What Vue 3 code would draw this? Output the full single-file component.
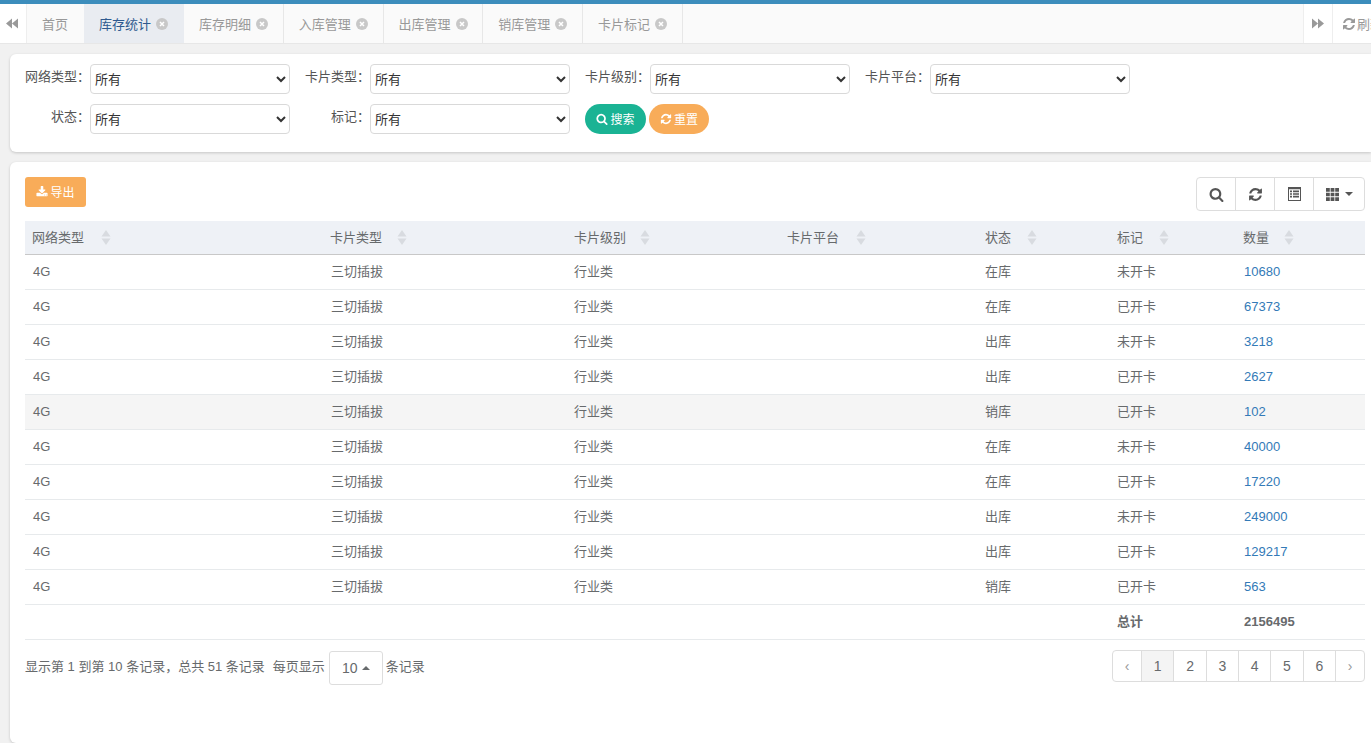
<script setup>
const tabs = [
  { name: '首页', home: true },
  { name: '库存统计', active: true },
  { name: '库存明细' },
  { name: '入库管理' },
  { name: '出库管理' },
  { name: '销库管理' },
  { name: '卡片标记' }
]
const filterRows = [
  ['网络类型', '卡片类型', '卡片级别', '卡片平台'],
  ['状态', '标记']
]
const columns = ['网络类型', '卡片类型', '卡片级别', '卡片平台', '状态', '标记', '数量']
const rows = [
  ['在库', '未开卡', '10680'],
  ['在库', '已开卡', '67373'],
  ['出库', '未开卡', '3218'],
  ['出库', '已开卡', '2627'],
  ['销库', '已开卡', '102', true],
  ['在库', '未开卡', '40000'],
  ['在库', '已开卡', '17220'],
  ['出库', '未开卡', '249000'],
  ['出库', '已开卡', '129217'],
  ['销库', '已开卡', '563']
]
const pages = ['‹', '1', '2', '3', '4', '5', '6', '›']
const searchPath = 'M1216 832q0-185-131.5-316.5t-316.5-131.5-316.5 131.5-131.5 316.5 131.5 316.5 316.5 131.5 316.5-131.5 131.5-316.5zm512 832q0 52-38 90t-90 38q-54 0-90-38l-343-342q-179 124-399 124-143 0-273.5-55.5t-225-150-150-225-55.5-273.5 55.5-273.5 150-225 225-150 273.5-55.5 273.5 55.5 225 150 150 225 55.5 273.5q0 220-124 399l343 343q37 37 37 90z'
const refreshPath = 'M1639 1056q0 5-1 7-64 268-268 434.5t-478 166.5q-146 0-282.5-55t-243.5-157l-129 129q-19 19-45 19t-45-19-19-45v-448q0-26 19-45t45-19h448q26 0 45 19t19 45-19 45l-137 137q71 66 161 102t187 36q134 0 250-65t186-179q11-17 53-117 8-23 30-23h192q13 0 22.5 9.5t9.5 22.5zm25-800v448q0 26-19 45t-45 19h-448q-26 0-45-19t-19-45 19-45l138-138q-148-137-349-137-134 0-250 65t-186 179q-11 17-53 117-8 23-30 23h-199q-13 0-22.5-9.5t-9.5-22.5v-7q65-268 270-434.5t480-166.5q146 0 284 55.5t245 156.5l130-129q19-19 45-19t45 19 19 45z'
const downloadPath = 'M1344 1344q0-26-19-45t-45-19-45 19-19 45 19 45 45 19 45-19 19-45zm256 0q0-26-19-45t-45-19-45 19-19 45 19 45 45 19 45-19 19-45zm128-224v320q0 40-28 68t-68 28h-1472q-40 0-68-28t-28-68v-320q0-40 28-68t68-28h465l135 136q58 56 136 56t136-56l136-136h464q40 0 68 28t28 68zm-325-569q17 41-14 70l-448 448q-18 19-45 19t-45-19l-448-448q-31-29-14-70 17-39 59-39h256v-448q0-26 19-45t45-19h256q26 0 45 19t19 45v448h256q42 0 59 39z'
</script>

<template>
  <div class="page">
    <div class="topline"></div>
    <nav class="tabbar">
      <button class="nav-btn nav-left" type="button">
        <svg class="arrows" viewBox="1 1 12 10"><path d="M7 1v10L1 6zM13 1v10L7 6z" /></svg>
      </button>
      <div class="tabs">
        <div v-for="tab in tabs" :key="tab.name" class="tab" :class="{ active: tab.active, home: tab.home }">
          <span>{{ tab.name }}</span>
          <svg v-if="!tab.home" class="close" viewBox="0 0 12 12">
            <circle cx="6" cy="6" r="6" />
            <path d="M4 4l4 4M8 4l-4 4" />
          </svg>
        </div>
      </div>
      <button class="nav-btn nav-right" type="button">
        <svg class="arrows" viewBox="1 1 12 10"><path d="M1 1v10l6-5zM7 1v10l6-5z" /></svg>
      </button>
      <div class="refresh-tab">
        <svg class="refresh-ico" viewBox="0 0 1792 1792"><path :d="refreshPath" /></svg>
        <span>刷新</span>
      </div>
    </nav>

    <main class="content">
      <section class="panel filter">
        <div v-for="(row, r) in filterRows" :key="r" class="filter-row">
          <div v-for="label in row" :key="label" class="field">
            <label class="field-label">{{ label }}：</label>
            <select class="field-select"><option>所有</option></select>
          </div>
          <div v-if="r === 1" class="field-actions">
            <button class="pill pill-green" type="button">
              <svg class="ico" viewBox="0 0 1792 1792"><path :d="searchPath" /></svg>搜索
            </button>
            <button class="pill pill-orange" type="button">
              <svg class="ico" viewBox="0 0 1792 1792"><path :d="refreshPath" /></svg>重置
            </button>
          </div>
        </div>
      </section>

      <section class="panel list">
        <div class="toolbar">
          <button class="export" type="button">
            <svg class="ico" viewBox="0 0 1792 1792"><path :d="downloadPath" /></svg>导出
          </button>
          <div class="tools">
            <button class="tool" type="button">
              <svg class="tool-ico" viewBox="0 0 1792 1792"><path :d="searchPath" /></svg>
            </button>
            <button class="tool" type="button">
              <svg class="tool-ico" viewBox="0 0 1792 1792"><path :d="refreshPath" /></svg>
            </button>
            <button class="tool" type="button">
              <svg class="list-ico" viewBox="0 0 13 14">
                <path fill-rule="evenodd" d="M0 0h13v14H0zM1 2.2v10.8h11V2.2z" />
                <path d="M2 3.6h2v1.6H2zM5 3.6h6v1.6H5zM2 6.2h2v1.6H2zM5 6.2h6v1.6H5zM2 8.8h2v1.6H2zM5 8.8h6v1.6H5z" />
              </svg>
            </button>
            <button class="tool tool-columns" type="button">
              <svg class="cols-ico" viewBox="0 0 13 13">
                <path d="M0 0h3.8v3.7H0zM4.6 0h3.8v3.7H4.6zM9.2 0H13v3.7H9.2zM0 4.65h3.8v3.7H0zM4.6 4.65h3.8v3.7H4.6zM9.2 4.65H13v3.7H9.2zM0 9.3h3.8V13H0zM4.6 9.3h3.8V13H4.6zM9.2 9.3H13V13H9.2z" />
              </svg>
              <i class="caret"></i>
            </button>
          </div>
        </div>

        <table class="grid">
          <thead>
            <tr>
              <th v-for="col in columns" :key="col">
                <span class="th-in">
                  {{ col }}
                  <svg class="sort" viewBox="0 0 10 15"><path d="M5 0l4.5 6.5h-9zM5 15L.5 8.5h9z" /></svg>
                </span>
              </th>
            </tr>
          </thead>
          <tbody>
            <tr v-for="(row, i) in rows" :key="i" :class="{ hover: row[3] }">
              <td class="latin">4G</td>
              <td>三切插拔</td>
              <td>行业类</td>
              <td></td>
              <td>{{ row[0] }}</td>
              <td>{{ row[1] }}</td>
              <td class="latin"><a class="num">{{ row[2] }}</a></td>
            </tr>
            <tr class="total">
              <td></td><td></td><td></td><td></td><td></td>
              <td>总计</td>
              <td class="latin">2156495</td>
            </tr>
          </tbody>
        </table>

        <div class="foot">
          <div class="foot-info">
            <span class="info">显示第 1 到第 10 条记录，总共 51 条记录</span>
            <span class="info per">每页显示</span>
            <button class="size" type="button">10<i class="caret up"></i></button>
            <span class="info">条记录</span>
          </div>
          <ul class="pager">
            <li v-for="(p, i) in pages" :key="i" :class="{ on: p === '1', first: i === 0, last: i === 7 }">{{ p }}</li>
          </ul>
        </div>
      </section>
    </main>
  </div>
</template>

<style>
html, body { margin: 0; padding: 0; height: 100%; overflow: hidden; background: #f1f1f1; }
</style>

<style scoped>
.page {
  height: 743px;
  display: flex;
  flex-direction: column;
  overflow: hidden;
  font-family: "Liberation Sans", "Noto Sans CJK SC", sans-serif;
  font-size: 13px;
  color: #676a6c;
  background: #f1f1f1;
}
.topline { height: 4px; background: #3c8dbc; flex: none; }
.tabbar {
  height: 40px;
  flex: none;
  display: flex;
  box-sizing: border-box;
  background: #fafafa;
  border-bottom: 1px solid #e7e7e7;
}
.nav-btn {
  width: 27px;
  padding: 0;
  border: 0;
  background: #fff;
  display: flex;
  align-items: center;
  justify-content: center;
  flex: none;
}
.nav-left { border-right: 1px solid #eee; padding-right: 3px; }
.nav-right { width: 30px; border-left: 1px solid #eee; border-right: 1px solid #eee; }
.arrows { width: 12px; height: 11px; fill: #999; }
.tabs { display: flex; flex: 1; min-width: 0; }
.tab {
  width: 99.75px;
  box-sizing: border-box;
  display: flex;
  align-items: center;
  padding-left: 15px;
  color: #999;
  border-right: 1px solid #e7e7e7;
}
.tab.home { width: 57px; border-right: 0; }
.tab.active { width: 100px; background: #e9ecf1; color: #2f5a8f; border-right: 0; }
.close { width: 12px; height: 12px; margin-left: 5px; flex: none; }
.close circle { fill: #c8c8c8; }
.close path { stroke: #fff; stroke-width: 1.5; fill: none; }
.refresh-tab {
  width: 38px;
  flex: none;
  display: flex;
  align-items: center;
  padding-left: 9px;
  box-sizing: border-box;
  background: #fff;
  color: #999;
  overflow: hidden;
  white-space: nowrap;
  gap: 1px;
}
.refresh-ico { width: 14px; height: 14px; fill: #999; flex: none; }
.content { flex: 1; display: flex; flex-direction: column; padding: 10px 0 0 10px; gap: 10px; min-height: 0; }
.panel { background: #fff; border-radius: 6px 0 0 6px; box-shadow: 0 1px 3px rgba(0, 0, 0, 0.18); }
.filter { padding: 10px 0 18px 15px; display: flex; flex-direction: column; gap: 10px; flex: none; }
.filter-row { display: flex; height: 30px; }
.field { width: 280px; display: flex; flex: none; }
.field-label {
  width: 65px;
  text-align: right;
  line-height: 26px;
  color: #555;
  white-space: nowrap;
  flex: none;
}
.field-select {
  width: 200px;
  height: 30px;
  padding: 0;
  box-sizing: border-box;
  border: 1px solid #d9d9d9;
  border-radius: 4px;
  background: #fff;
  color: #333;
  font: 13px "Liberation Sans", "Noto Sans CJK SC", sans-serif;
}
.field-actions { display: flex; gap: 3px; }
.pill {
  height: 30px;
  width: 61px;
  padding: 0 0 1px;
  border: 0;
  border-radius: 15px;
  color: #fff;
  font: 12px "Liberation Sans", "Noto Sans CJK SC", sans-serif;
  display: flex;
  align-items: center;
  justify-content: center;
  gap: 2px;
}
.pill-green { background: #1ab394; }
.pill-orange { background: #f8ac59; width: 60px; }
.ico { width: 12px; height: 12px; fill: #fff; flex: none; }
.list { flex: 1; padding: 15px 6px 0 15px; min-height: 0; }
.toolbar { display: flex; justify-content: space-between; align-items: flex-start; height: 34px; margin-bottom: 10px; }
.export {
  width: 61px;
  height: 30px;
  padding: 0 0 1px;
  border: 0;
  border-radius: 3px;
  background: #f8ac59;
  color: #fff;
  font: 12px "Liberation Sans", "Noto Sans CJK SC", sans-serif;
  display: flex;
  align-items: center;
  justify-content: center;
  gap: 2px;
}
.tools { display: flex; height: 34px; border: 1px solid #ddd; border-radius: 4px; box-sizing: border-box; background: #fff; }
.tool {
  width: 39px;
  padding: 0;
  border: 0;
  border-right: 1px solid #ddd;
  background: transparent;
  display: flex;
  align-items: center;
  justify-content: center;
}
.tool-columns { width: 50px; border-right: 0; gap: 6px; }
.tool-ico { width: 15px; height: 15px; fill: #555; }
.list-ico { width: 13px; height: 14px; fill: #555; }
.cols-ico { width: 13px; height: 13px; fill: #555; }
.caret { width: 0; height: 0; border: 4px solid transparent; border-top-color: #555; border-bottom: 0; }
.caret.up { border-top: 0; border-bottom: 4px solid #676a6c; margin-left: 4px; }
.grid { width: 100%; table-layout: fixed; border-collapse: separate; border-spacing: 0; }
.grid th:nth-child(1) { width: 298px; }
.grid th:nth-child(2) { width: 243px; }
.grid th:nth-child(3) { width: 213px; }
.grid th:nth-child(4) { width: 198px; }
.grid th:nth-child(5) { width: 132px; }
.grid th:nth-child(6) { width: 126px; }
.grid th {
  height: 34px;
  box-sizing: border-box;
  padding: 0 8px 3px;
  text-align: left;
  font-weight: 400;
  background: #eef1f6;
  border-bottom: 1px solid #c8c8c8;
}
.grid th:nth-child(1), .grid th:nth-child(2) { padding-left: 7px; }
.th-in { display: inline-flex; align-items: center; gap: 16px; }
.grid th:nth-child(2) .th-in, .grid th:nth-child(7) .th-in { gap: 15px; }
.grid th:nth-child(3) .th-in { gap: 14px; }
.grid th:nth-child(4) .th-in, .grid th:nth-child(1) .th-in { gap: 17px; }
.sort { width: 10px; height: 15px; margin-top: 3px; fill: #d8dbe0; }
.grid td {
  height: 35px;
  box-sizing: border-box;
  padding: 0 8px 4px;
  border-bottom: 1px solid #e7eaec;
}
.grid td.latin { padding-bottom: 2px; }
.grid td:nth-child(7) { padding-left: 9px; }
.hover td { background: #f5f5f5; }
.num { color: #337ab7; }
.total td { font-weight: 700; }
.foot { display: flex; justify-content: space-between; align-items: flex-start; }
.foot-info { display: flex; align-items: center; margin-top: 11px; height: 34px; white-space: nowrap; }
.info { margin-bottom: 5px; }
.per { margin-left: 8px; margin-right: 4px; }
.size {
  width: 54px;
  height: 34px;
  margin-right: 3px;
  padding: 0;
  border: 1px solid #ddd;
  border-radius: 3px;
  background: #fff;
  color: #676a6c;
  font: 14px "Liberation Sans", sans-serif;
  display: flex;
  align-items: center;
  justify-content: center;
}
.pager {
  list-style: none;
  margin: 10px 0 0;
  padding: 0;
  height: 32px;
  display: flex;
  border: 1px solid #ddd;
  border-radius: 4px;
  box-sizing: border-box;
  font-size: 14px;
}
.pager li {
  width: 32.33px;
  box-sizing: border-box;
  border-right: 1px solid #ddd;
  display: flex;
  align-items: center;
  justify-content: center;
}
.pager li.on { background: #f4f4f4; }
.pager li.first { width: 29px; color: #999; }
.pager li.last { width: 28px; color: #999; border-right: 0; }
</style>
